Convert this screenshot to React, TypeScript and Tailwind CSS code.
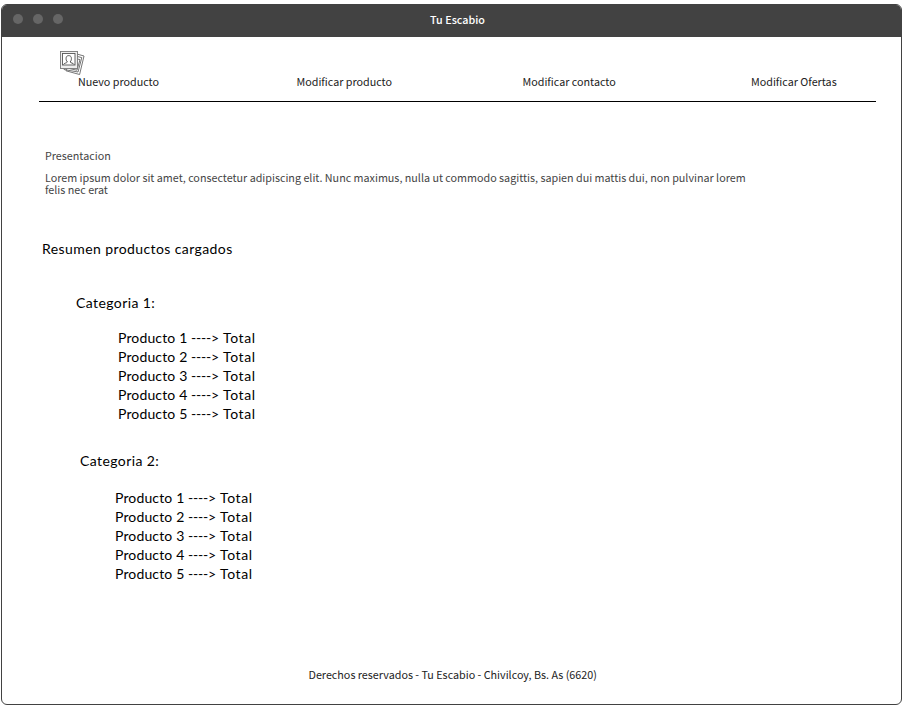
const NAV = [
  { label: 'Nuevo producto', width: 'w-[218.5px]' },
  { label: 'Modificar producto', width: 'w-[226px]' },
  { label: 'Modificar contacto', width: 'w-[228.5px]' },
  { label: 'Modificar Ofertas', width: 'w-auto' },
];

const PRODUCTS = [1, 2, 3, 4, 5];

function PhotosIcon() {
  return (
    <svg className="absolute left-[20px] top-[13px]" width="28" height="28" viewBox="0 0 28 28" fill="none" stroke="#666" strokeWidth="0.9">
      <g transform="translate(1 1)">
        <path d="M17.5 3.2 L24 5 L19.6 23.5 L6 19.8 L6.5 18" />
        <path d="M17.5 5.5 L21.8 6.6 L18 21 L4 18.5 L4 17.5" />
        <path d="M17.5 8 L20 8.6 L17 19.2 L9 17.5" />
        <rect x="0.5" y="0.5" width="17" height="17" fill="#eee" stroke="#777" />
        <rect x="2.5" y="2.5" width="12.5" height="11.5" fill="#fff" stroke="#555" />
        <path d="M3.5 13.5 C4 12 7 12 7.4 11 C6 9.5 6 8 6.2 6.5 C6.5 4 11 4 11.3 6.5 C11.5 8 11.5 9.5 10.1 11 C10.5 12 13.5 12 14 13.5" stroke="#444" />
      </g>
    </svg>
  );
}

function ProductList() {
  return (
    <ul>
      {PRODUCTS.map((n) => (
        <li key={n} className="flex">
          <span className="w-[73px] tracking-[0.14px]">Producto {n}</span>
          <span className="w-[32px] tracking-[-0.2px]">----&gt;</span>
          <span className="tracking-[0.6px]">Total</span>
        </li>
      ))}
    </ul>
  );
}

export default function App() {
  return (
    <div className="h-[712px] overflow-hidden bg-white pt-1 pl-px font-['Noto_Sans_CJK_SC',sans-serif] text-[10.75px] leading-[12px] whitespace-nowrap text-[#222]">
      <div className="flex h-[701px] w-[901px] flex-col overflow-hidden rounded-[6px] border border-[#424242] bg-white">
        <header className="grid h-8 shrink-0 grid-cols-[1fr_auto_1fr] items-center bg-[#424242]">
          <div className="flex gap-[10px] pl-[10.5px] pb-1">
            <i className="size-[10px] rounded-full bg-[#666]" />
            <i className="size-[10px] rounded-full bg-[#666]" />
            <i className="size-[10px] rounded-full bg-[#666]" />
          </div>
          <h1 className="pb-[2px] pl-[12px] font-medium text-white">Tu Escabio</h1>
        </header>

        <nav className="relative ml-[37px] flex h-[65px] w-[837px] shrink-0 border-b border-black pt-[39px] pl-[39px]">
          <PhotosIcon />
          {NAV.map((item) => (
            <a key={item.label} className={item.width}>{item.label}</a>
          ))}
        </nav>

        <main className="grow">
          <section className="pt-[48px] pl-[43px] text-[#444]">
            <h2>Presentacion</h2>
            <p className="mt-[10px] w-[710px] tracking-[-0.004px] whitespace-normal">
              Lorem ipsum dolor sit amet, consectetur adipiscing elit. Nunc maximus, nulla ut commodo sagittis, sapien dui mattis dui, non pulvinar lorem felis nec erat
            </p>
          </section>

          <section className="pt-[43px] pl-[40px] font-['Lato',sans-serif] text-[14px] leading-[19px] text-black">
            <h2 className="tracking-[0.41px]">Resumen productos cargados</h2>
            <h3 className="mt-[35px] pl-[34px] tracking-[0.41px]">Categoria 1:</h3>
            <div className="mt-[16px] pl-[76px]">
              <ProductList />
            </div>
            <h3 className="mt-[28px] pl-[38px] tracking-[0.41px]">Categoria 2:</h3>
            <div className="mt-[18px] pl-[73px]">
              <ProductList />
            </div>
          </section>
        </main>

        <footer className="pb-[23px] pl-[306.5px]">Derechos reservados - Tu Escabio - Chivilcoy, Bs. As (6620)</footer>
      </div>
    </div>
  );
}
